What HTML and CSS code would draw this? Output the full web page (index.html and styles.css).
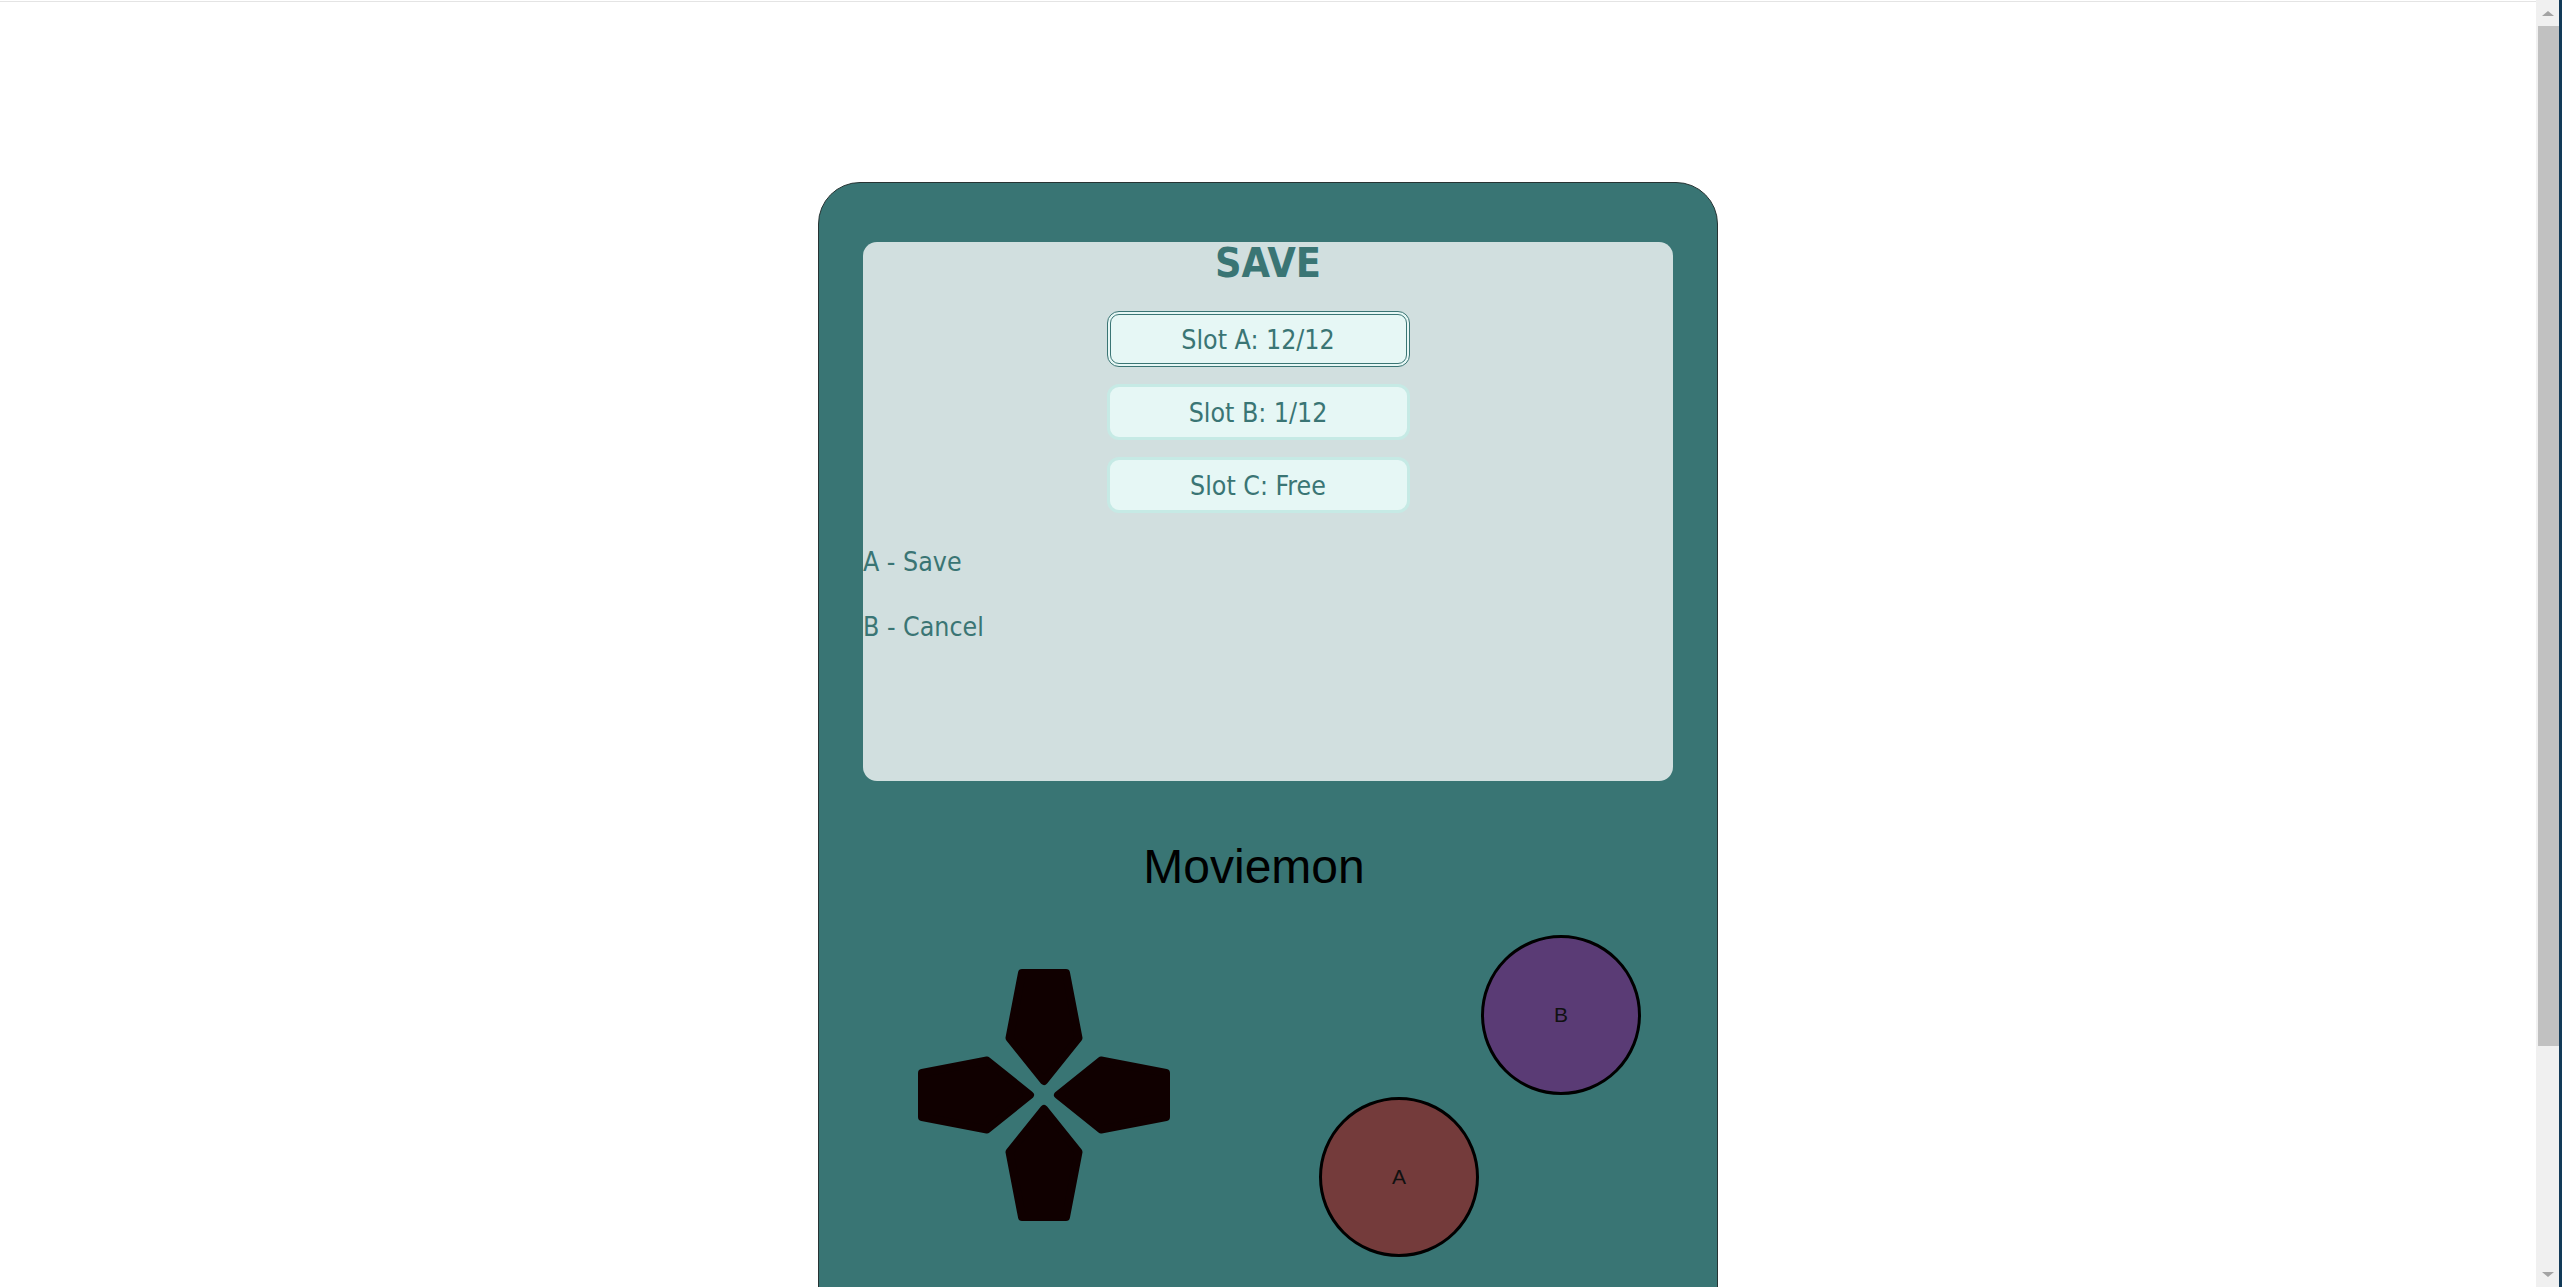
FILE: index.html
```html
<!DOCTYPE html>
<html lang="en">
<head>
<meta charset="utf-8">
<title>Moviemon - Save</title>
<link rel="stylesheet" href="styles.css">
</head>
<body>
<div class="page">
  <div class="topline"></div>
  <main class="console">
    <section class="screen">
      <h1 class="screen-title">SAVE</h1>
      <div class="slots">
        <div class="slot slot-selected">Slot A: 12/12</div>
        <div class="slot">Slot B: 1/12</div>
        <div class="slot">Slot C: Free</div>
      </div>
      <div class="hints">
        <p class="hint">A - Save</p>
        <p class="hint">B - Cancel</p>
      </div>
    </section>
    <h2 class="brand">Moviemon</h2>
    <div class="controls">
      <svg class="dpad" width="252" height="252" viewBox="-126 -126 252 252" aria-hidden="true">
        <defs>
          <path id="arm" d="M -22 -122 L 22 -122 L 34.5 -57 L 0 -14 L -34.5 -57 Z"/>
        </defs>
        <g fill="#100000" stroke="#100000" stroke-width="8" stroke-linejoin="round">
          <use href="#arm"/>
          <use href="#arm" transform="rotate(90)"/>
          <use href="#arm" transform="rotate(180)"/>
          <use href="#arm" transform="rotate(270)"/>
        </g>
      </svg>
      <div class="ab">
        <div class="btn btn-b">B</div>
        <div class="btn btn-a">A</div>
      </div>
    </div>
  </main>
</div>
<div class="scrollbar" aria-hidden="true">
  <div class="sb-button"><span class="arrow-up"></span></div>
  <div class="sb-track"><div class="sb-thumb"></div></div>
  <div class="sb-button"><span class="arrow-down"></span></div>
</div>
</body>
</html>
```

FILE: styles.css
```css
html, body {
  margin: 0;
  padding: 0;
  height: 100%;
  overflow: hidden;
  background: #ffffff;
}

body {
  display: flex;
  flex-direction: row;
}

.page {
  flex: 1;
  min-width: 0;
  overflow: hidden;
  padding-top: 1px;
}

.topline {
  height: 1px;
  background: #e4e4e4;
}

.console {
  box-sizing: border-box;
  width: 900px;
  height: 1360px;
  margin: 180px auto 0;
  padding: 59px 44px 0;
  background: #397574;
  border: 1px solid #263333;
  border-radius: 42px;
  display: flex;
  flex-direction: column;
}

.screen {
  height: 539px;
  border-radius: 14px;
  background: #d1dfdf;
  color: #3a7574;
  display: flex;
  flex-direction: column;
  font-family: "DejaVu Sans Condensed", "DejaVu Sans", sans-serif;
  font-stretch: condensed;
}

.screen-title {
  margin: 0;
  font-size: 41px;
  font-weight: bold;
  line-height: 42px;
  text-align: center;
}

.slots {
  margin-top: 27px;
  padding-right: 20px;
  display: flex;
  flex-direction: column;
  align-items: center;
  gap: 17px;
}

.slot {
  box-sizing: border-box;
  width: 303px;
  height: 56px;
  border: 3px solid #c6eae5;
  border-radius: 12px;
  background: #e6f7f5;
  display: flex;
  align-items: center;
  justify-content: center;
  font-size: 26.5px;
}

.slot-selected {
  border: 4px double #3a7574;
}

.hints {
  margin-top: 33px;
  display: flex;
  flex-direction: column;
  gap: 34px;
}

.hint {
  margin: 0;
  font-size: 26.5px;
  line-height: 31px;
}

.brand {
  margin: 58px 0 0;
  padding-right: 28px;
  font-family: "Liberation Sans", Arial, sans-serif;
  font-size: 48px;
  font-weight: normal;
  line-height: 55px;
  color: #000000;
  text-align: center;
}

.controls {
  margin-top: 41px;
  padding-left: 55px;
  display: flex;
  align-items: flex-start;
}

.dpad {
  display: block;
  margin-top: 34px;
}

.ab {
  margin-left: auto;
  margin-right: 32px;
  display: grid;
  grid-template-columns: 160px 160px;
  grid-template-rows: 160px 160px;
  gap: 2px;
}

.btn {
  box-sizing: border-box;
  width: 160px;
  height: 160px;
  border: 3px solid #000000;
  border-radius: 50%;
  display: flex;
  align-items: center;
  justify-content: center;
  font-family: "Liberation Sans", Arial, sans-serif;
  font-size: 21px;
  color: #111111;
}

.btn-b {
  grid-column: 2;
  grid-row: 1;
  background: #5a3b75;
}

.btn-a {
  grid-column: 1;
  grid-row: 2;
  background: #743b3b;
}

/* window scrollbar as captured */
.scrollbar {
  width: 23px;
  flex: none;
  background: #f0f0f0;
  border-right: 3px solid #123a58;
  display: flex;
  flex-direction: column;
}

.sb-button {
  height: 26px;
  flex: none;
  display: flex;
  align-items: center;
  justify-content: center;
}

.arrow-up {
  width: 0;
  height: 0;
  border-left: 6px solid transparent;
  border-right: 6px solid transparent;
  border-bottom: 5px solid #a3a3a3;
}

.arrow-down {
  width: 0;
  height: 0;
  border-left: 6px solid transparent;
  border-right: 6px solid transparent;
  border-top: 5px solid #a3a3a3;
}

.sb-track {
  flex: 1;
  padding-left: 2px;
}

.sb-thumb {
  height: 1020px;
  background: #c1c1c1;
}
```
